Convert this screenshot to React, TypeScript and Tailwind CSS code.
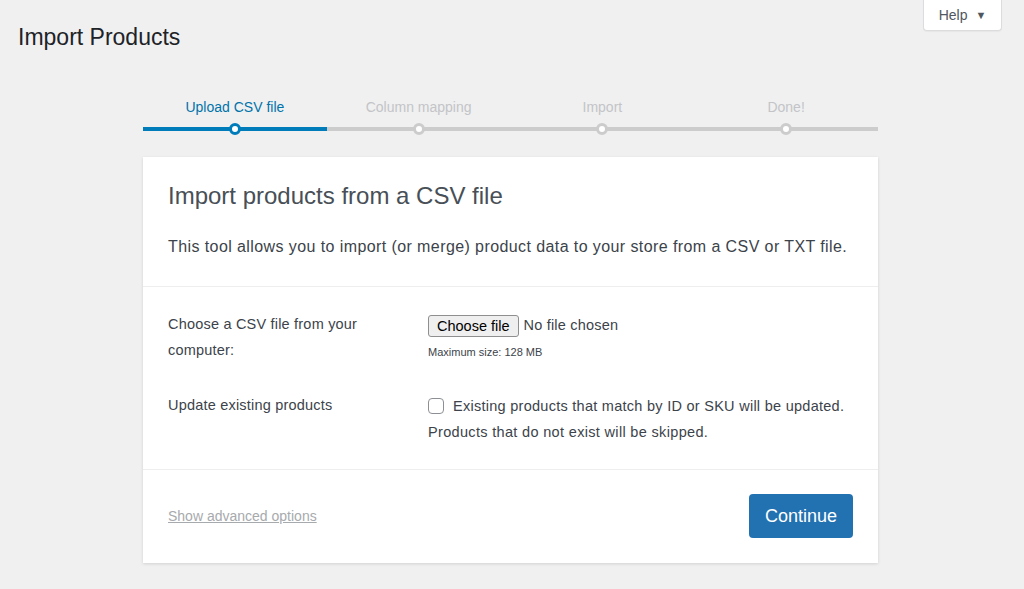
import React from 'react';

const steps = ['Upload CSV file', 'Column mapping', 'Import', 'Done!'];

export default function App() {
  return (
    <div className="min-h-screen bg-[#f0f0f1] font-['Liberation_Sans',Arial,sans-serif] text-[#3c434a]">
      <div className="flex items-start justify-between">
        <h1 className="ml-[18px] mt-[22px] text-[23px] leading-[30px] text-[#1d2327]">Import Products</h1>
        <button className="mr-[22px] flex h-[31px] w-[79px] items-center justify-center gap-[8px] rounded-b-[4px] border border-t-0 border-[#dcdcde] bg-white text-[14px] text-[#50575e] shadow-[0_1px_1px_rgba(0,0,0,0.04)]">
          Help
          <span className="text-[11px]">▼</span>
        </button>
      </div>

      <ol className="ml-[143px] mt-[45px] grid w-[735px] grid-cols-4">
        {steps.map((s, i) => {
          const active = i === 0;
          return (
            <li key={s} className="flex flex-col items-center">
              <span className={`text-[14px] leading-[20px] ${active ? 'text-[#0073aa]' : 'text-[#c3c4c7]'}`}>{s}</span>
              <div className={`relative mt-[10px] h-[4px] w-full ${active ? 'bg-[#007cba]' : 'bg-[#ccc]'}`}>
                <span
                  className={`absolute left-1/2 top-1/2 h-[12px] w-[12px] -translate-x-1/2 -translate-y-1/2 rounded-full border-[3px] bg-white ${active ? 'border-[#007cba]' : 'border-[#ccc]'}`}
                />
              </div>
            </li>
          );
        })}
      </ol>

      <div className="ml-[143px] mt-[26px] w-[735px] bg-white shadow-[0_1px_3px_rgba(0,0,0,0.13)]">
        <header className="border-b border-[#eeeeee] px-[25px] pb-[28px] pt-[24px]">
          <h2 className="text-[24px] leading-[30px] text-[#484f56]">Import products from a CSV file</h2>
          <p className="mt-[25px] text-[16px] leading-[22px] tracking-[0.41px] text-[#3c434a]">
            This tool allows you to import (or merge) product data to your store from a CSV or TXT file.
          </p>
        </header>

        <section className="border-b border-[#eeeeee] px-[25px] pb-[22px] pt-[24px] text-[14.5px] tracking-[0.2px]">
          <div className="flex">
            <label className="w-[260px] leading-[26px]">
              Choose a CSV file from your
              <br />
              computer:
            </label>
            <div className="pt-[4px]">
              <div className="flex items-center gap-[5px]">
                <span className="rounded-[3px] border border-[#8f8f8f] bg-[#efefef] px-[8px] py-[1px] text-[14.5px] leading-[18px] tracking-normal text-black">
                  Choose file
                </span>
                <span>No file chosen</span>
              </div>
              <p className="mt-[8px] text-[11px] leading-[14px] tracking-normal text-[#3c434a]">Maximum size: 128 MB</p>
            </div>
          </div>

          <div className="mt-[29px] flex">
            <label className="w-[260px] leading-[26px]">Update existing products</label>
            <div className="pt-[1px] pb-[2px] leading-[26px]">
              <div className="flex items-center gap-[9px]">
                <span className="h-[16px] w-[16px] rounded-[4px] border border-[#8c8f94] bg-white" />
                <span className="tracking-[0.27px]">Existing products that match by ID or SKU will be updated.</span>
              </div>
              <p className="tracking-[0.33px]">Products that do not exist will be skipped.</p>
            </div>
          </div>
        </section>

        <footer className="flex items-center justify-between px-[25px] pb-[25px] pt-[24px]">
          <a href="#" className="text-[14px] text-[#a7aaad] underline">
            Show advanced options
          </a>
          <button className="h-[44px] w-[104px] rounded-[4px] bg-[#2271b1] text-[18px] text-white">Continue</button>
        </footer>
      </div>
    </div>
  );
}
